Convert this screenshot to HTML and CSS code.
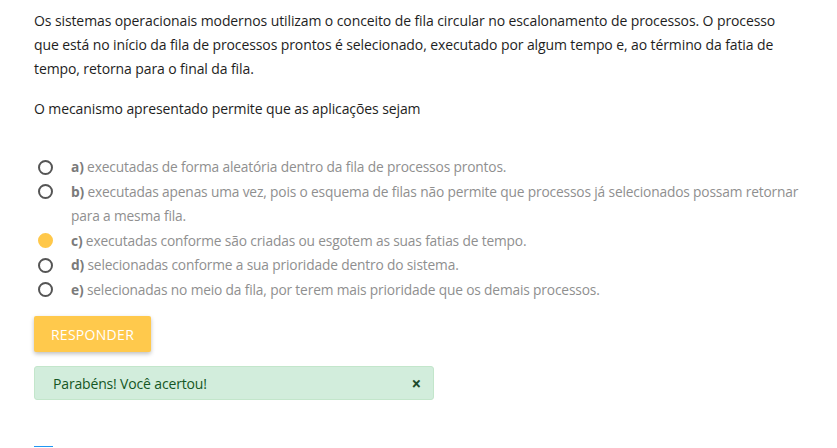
FILE: index.html
```html
<!DOCTYPE html>
<html lang="pt">
<head>
<meta charset="utf-8">
<link rel="stylesheet" href="styles.css">
</head>
<body>
<div class="question">
  <div class="statement">
    <p>Os sistemas operacionais modernos utilizam o conceito de fila circular no escalonamento de processos. O processo que está no início da fila de processos prontos é selecionado, executado por algum tempo e, ao término da fatia de tempo, retorna para o final da fila.</p>
    <p>O mecanismo apresentado permite que as aplicações sejam</p>
  </div>
  <ul class="options">
    <li class="option"><span class="radio"></span><span class="text"><b>a)</b> executadas de forma aleatória dentro da fila de processos prontos.</span></li>
    <li class="option"><span class="radio"></span><span class="text"><b>b)</b> executadas apenas uma vez, pois o esquema de filas não permite que processos já selecionados possam retornar para a mesma fila.</span></li>
    <li class="option"><span class="radio checked"></span><span class="text"><b>c)</b> executadas conforme são criadas ou esgotem as suas fatias de tempo.</span></li>
    <li class="option"><span class="radio"></span><span class="text"><b>d)</b> selecionadas conforme a sua prioridade dentro do sistema.</span></li>
    <li class="option"><span class="radio"></span><span class="text"><b>e)</b> selecionadas no meio da fila, por terem mais prioridade que os demais processos.</span></li>
  </ul>
  <button class="btn">RESPONDER</button>
  <div class="alert"><span>Parabéns! Você acertou!</span><span class="close">×</span></div>
  <div class="next"></div>
</div>
</body>
</html>
```
FILE: styles.css
```css
html, body { margin: 0; padding: 0; background: #fff; overflow: hidden; }
body { font-family: "Open Sans", "Noto Sans", sans-serif; font-size: 13.75px; color: #212121; letter-spacing: -0.16px; }
.question { padding: 9px 0 0 34px; }
.statement { width: 750px; font-size: 14px; letter-spacing: -0.1px; color: #1e1e1e; }
.statement p { margin: 0 0 16px 0; line-height: 24px; }
.statement p:last-child { margin-bottom: 0; }
.options { list-style: none; margin: 0; padding: 0; margin-top: 34px; width: 780px; }
.option { display: flex; align-items: flex-start; line-height: 24.5px; color: #8f8f8f; }
.option b { color: #7a7a7a; font-weight: 700; }
.radio { flex: none; width: 11px; height: 11px; border: 2px solid #555; border-radius: 50%; margin: 4.5px 18px 0 4px; }
.radio.checked { border-color: #ffc84a; background: #ffc84a; }
.btn { display: block; margin-top: 14px; width: 117px; height: 36px; border: 0; border-radius: 2px; background: #ffc94c; color: #fff; font-family: inherit; font-size: 14px; letter-spacing: 0.3px; box-shadow: 0 2px 4px rgba(0,0,0,0.25); padding: 0; }
.alert { display: flex; justify-content: space-between; align-items: center; margin-top: 14px; padding: 0 12px 0 18px; box-sizing: border-box; width: 400px; height: 34px; background: #d2eddc; border: 1px solid #c3e6cb; border-radius: 3px; color: #155724; font-size: 14px; }
.close { font-weight: 700; font-size: 17px; color: #1d4a2c; }
.next { margin-top: 46px; width: 19px; height: 1px; background: #2196f3; }
```
